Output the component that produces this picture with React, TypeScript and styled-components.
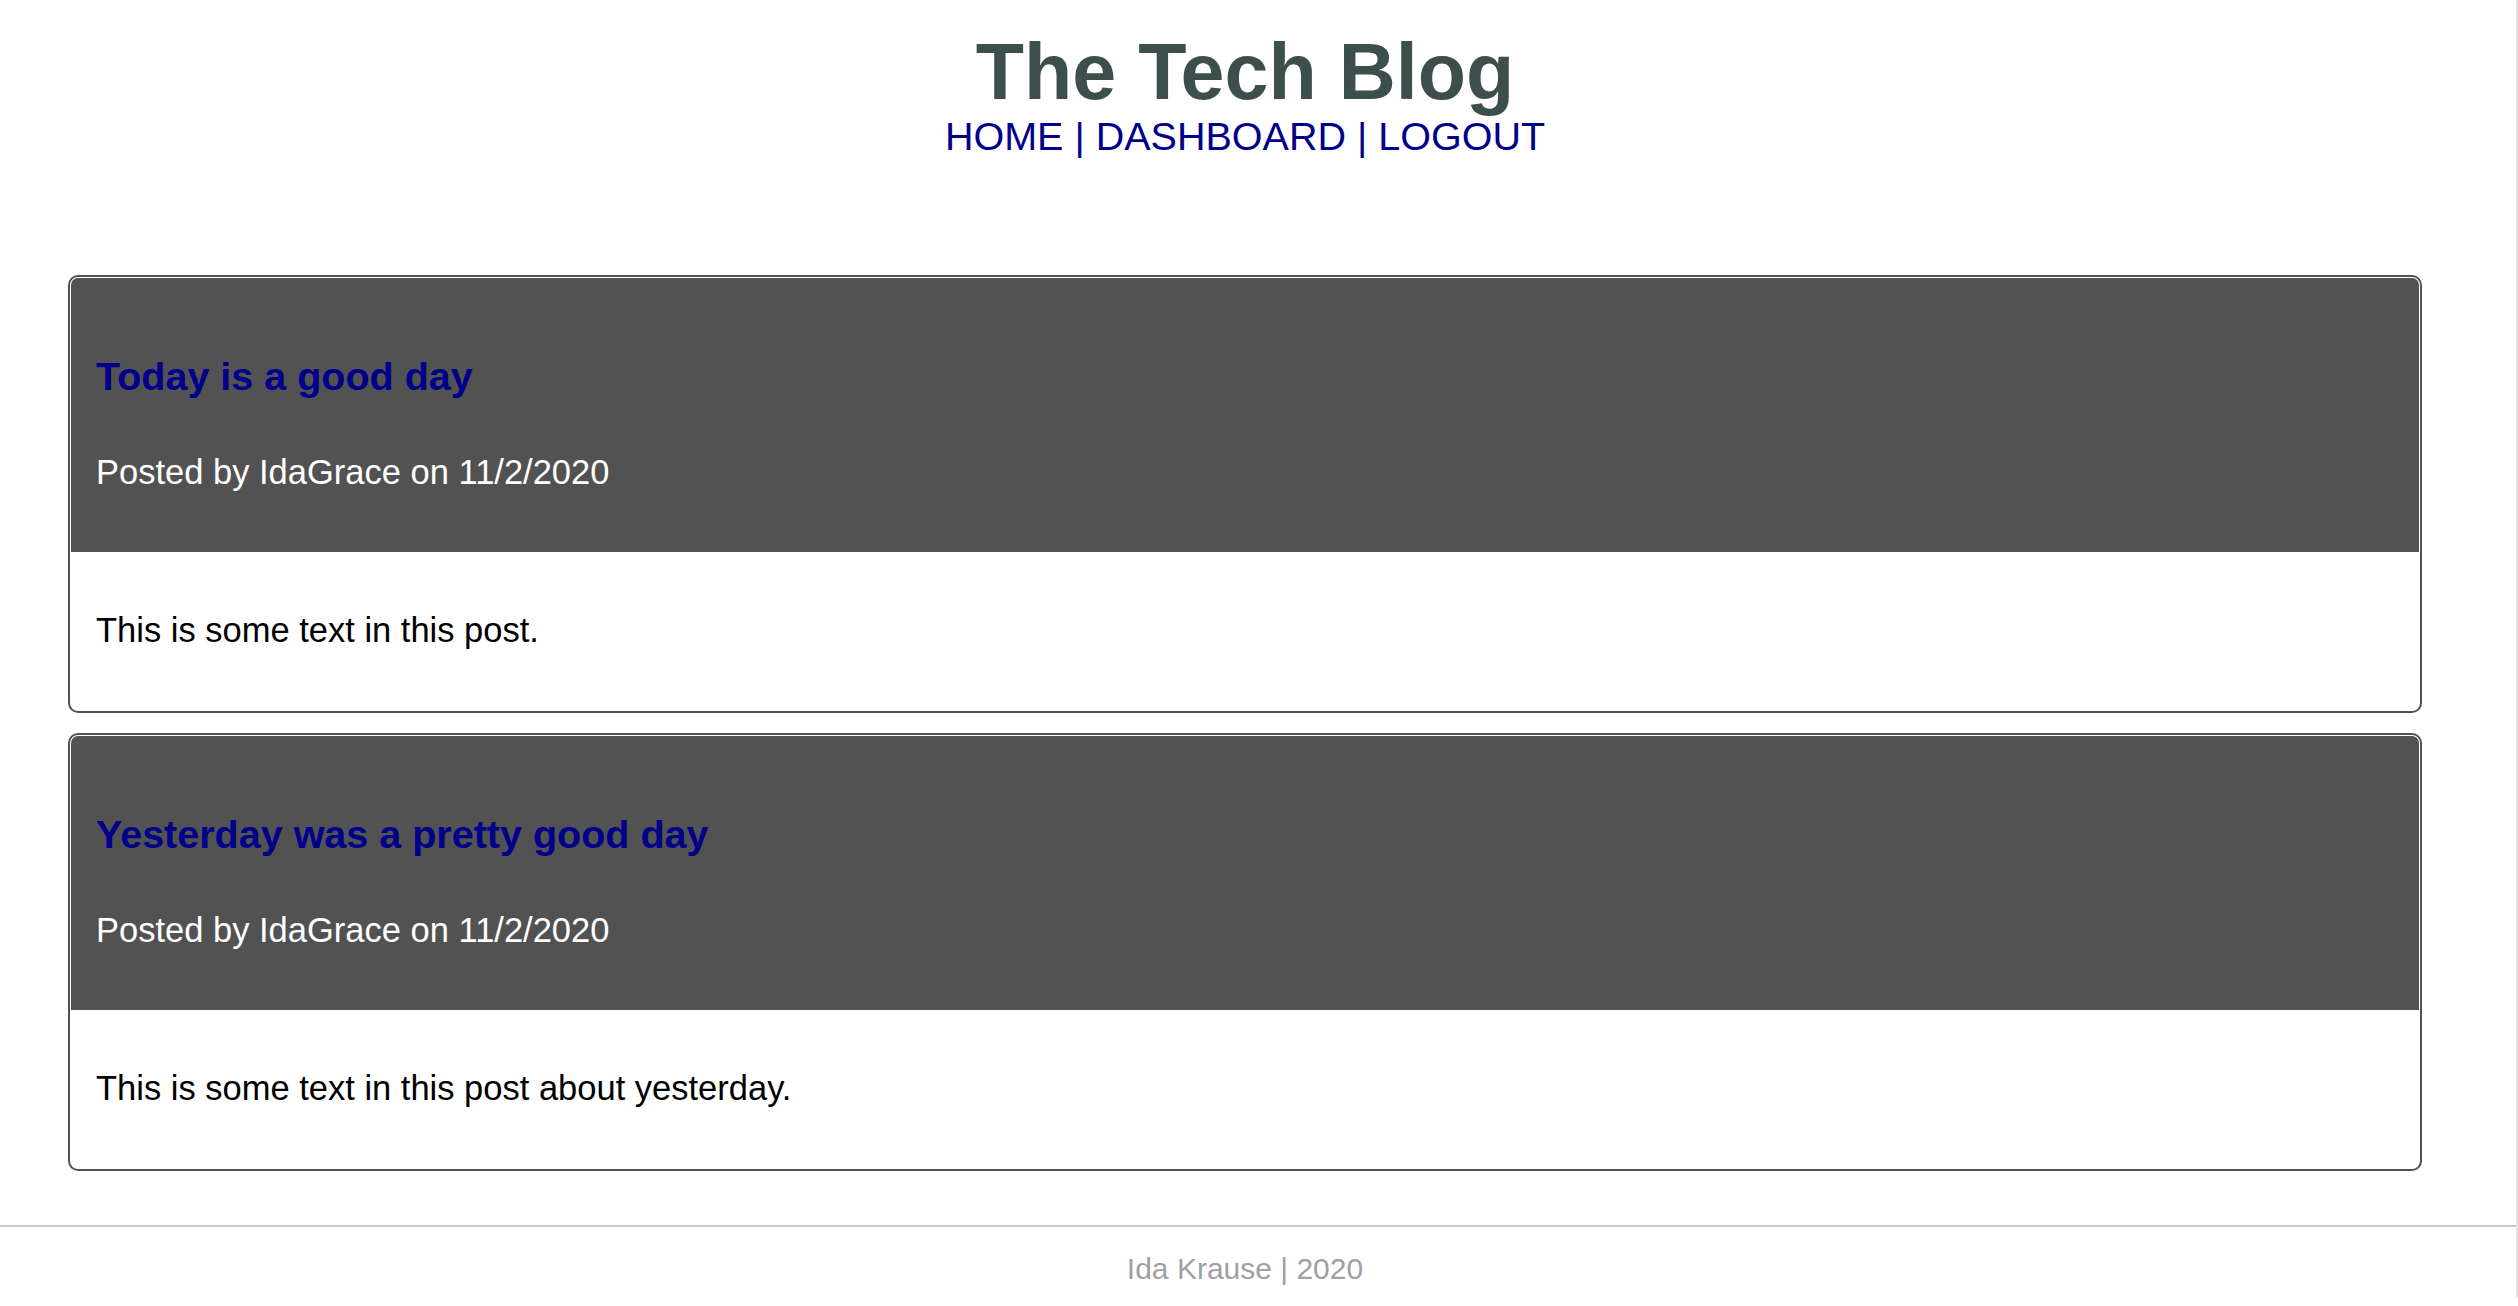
import React from "react";
import styled, { createGlobalStyle } from "styled-components";

const GlobalStyle = createGlobalStyle`
  * { box-sizing: border-box; }
  html {
    background: #ffffff;
    border-right: 2px solid #e6e6e6;
  }
  body {
    margin: 0;
    font-family: "Liberation Sans", Arial, Helvetica, sans-serif;
    color: #000000;
  }
`;

const Page = styled.div`
  display: flex;
  flex-direction: column;
`;

const Header = styled.header`
  display: flex;
  flex-direction: column;
  align-items: center;
  padding: 31.5px 26px 0 0;
`;

const SiteTitle = styled.h1`
  margin: 0;
  font-size: 79px;
  line-height: 79px;
  font-weight: 700;
  color: #3c4f4d;
`;

const Nav = styled.nav`
  margin-top: 6.5px;
  font-size: 39.5px;
  line-height: 39.5px;
  color: #00008b;
  display: flex;
  gap: 0.28em;
`;

const NavLink = styled.a`
  color: #00008b;
  text-decoration: none;
`;

const Sep = styled.span`
  color: #00008b;
`;

const Main = styled.main`
  display: flex;
  flex-direction: column;
  gap: 19.5px;
  padding: 118px 94px 0 68px;
`;

const Card = styled.article`
  display: flex;
  flex-direction: column;
  border: 2px solid #525252;
  border-radius: 10px;
  padding: 1px;
  background: #ffffff;
`;

const CardHeader = styled.div`
  display: flex;
  flex-direction: column;
  background: #525252;
  border-radius: 7px 7px 0 0;
  padding: 79px 25px 63px;
`;

const PostTitle = styled.h2`
  margin: 0;
  font-size: 39.5px;
  line-height: 39.5px;
  font-weight: 700;
`;

const PostLink = styled.a`
  color: #00008b;
  text-decoration: none;
`;

const Meta = styled.p`
  margin: 58.5px 0 0;
  font-size: 34.5px;
  line-height: 34.5px;
  color: #ffffff;
`;

const CardBody = styled.div`
  padding: 61px 25px 62.5px;
  font-size: 34.5px;
  line-height: 34.5px;
  color: #000000;
`;

const Footer = styled.footer`
  margin-top: 54px;
  border-top: 2px solid #c8c8c8;
  padding: 26.5px 26px 14px 0;
  text-align: center;
  font-size: 30px;
  line-height: 30px;
  color: #a0a0a0;
`;

type Post = { title: string; author: string; date: string; body: string };

const posts: Post[] = [
  {
    title: "Today is a good day",
    author: "IdaGrace",
    date: "11/2/2020",
    body: "This is some text in this post.",
  },
  {
    title: "Yesterday was a pretty good day",
    author: "IdaGrace",
    date: "11/2/2020",
    body: "This is some text in this post about yesterday.",
  },
];

export default function App() {
  return (
    <Page>
      <GlobalStyle />
      <Header>
        <SiteTitle>The Tech Blog</SiteTitle>
        <Nav>
          <NavLink href="#">HOME</NavLink>
          <Sep>|</Sep>
          <NavLink href="#">DASHBOARD</NavLink>
          <Sep>|</Sep>
          <NavLink href="#">LOGOUT</NavLink>
        </Nav>
      </Header>
      <Main>
        {posts.map((p) => (
          <Card key={p.title}>
            <CardHeader>
              <PostTitle>
                <PostLink href="#">{p.title}</PostLink>
              </PostTitle>
              <Meta>
                Posted by {p.author} on {p.date}
              </Meta>
            </CardHeader>
            <CardBody>{p.body}</CardBody>
          </Card>
        ))}
      </Main>
      <Footer>Ida Krause | 2020</Footer>
    </Page>
  );
}
